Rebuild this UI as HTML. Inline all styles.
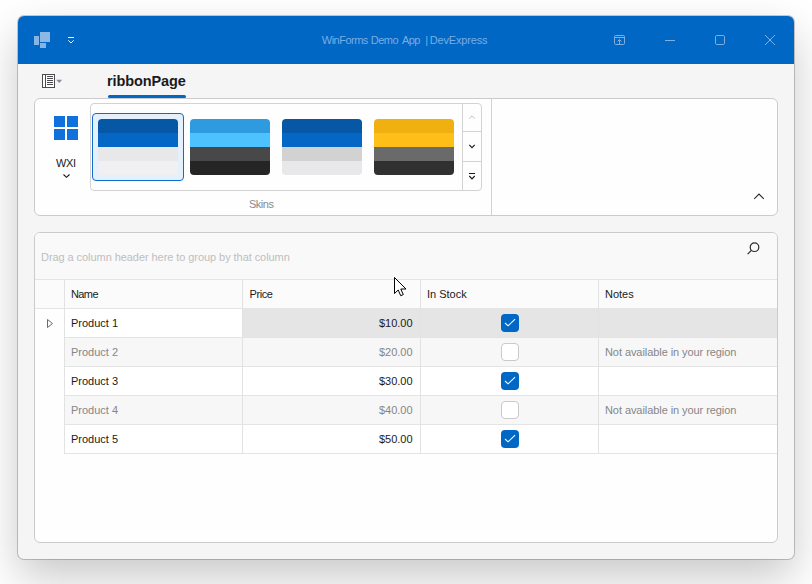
<!DOCTYPE html>
<html lang="en">
<head>
<meta charset="utf-8">
<title>WinForms Demo App | DevExpress</title>
<style>
html,body{margin:0;padding:0;}
body{width:812px;height:584px;overflow:hidden;background:#fff;position:relative;
  font-family:"Liberation Sans",sans-serif;font-size:11px;color:#1a1a1a;}
.abs,.win *{position:absolute;box-sizing:border-box;}
.win{position:absolute;box-sizing:border-box;left:18px;top:16px;width:776px;height:543px;background:#f5f5f6;border-radius:6px;
  box-shadow:0 0 0 1px rgba(0,0,0,.20), 0 18px 44px rgba(0,0,0,.22);overflow:hidden;}
.title{left:0;top:0;width:776px;height:48px;background:#0067c4;}
.title .cap{left:0;top:16px;width:776px;height:16px;line-height:16px;color:#78ade4;font-size:11px;white-space:pre;}
.title .cap span{top:0;height:16px;}
.tab{left:89px;top:55.3px;width:80px;height:20px;line-height:20px;font-weight:bold;font-size:14.5px;letter-spacing:-0.1px;color:#1a1a1a;white-space:nowrap;}
.tabline{left:90px;top:79px;width:77.5px;height:3px;border-radius:2px;background:#0067c4;}
.panel{background:#fefefe;border:1px solid #cbcbcb;border-radius:6px;}
.ribbon{left:16px;top:82px;width:744px;height:118px;}
.gal{left:72px;top:87px;width:392px;height:88px;border:1px solid #d2d2d2;border-radius:4px;background:#fefefe;}
.gsep{left:444px;top:88px;width:1px;height:86px;background:#d2d2d2;}
.gh{left:445px;width:18px;height:1px;background:#d2d2d2;}
.sel{left:74px;top:97px;width:92px;height:68px;border:1px solid #0f6ccf;border-radius:4px;background:#e4f0fb;}
.skin{top:103px;width:80px;height:56px;border-radius:4px;overflow:hidden;}
.skin i{left:0;width:80px;height:14px;}
.skin i:nth-child(1){top:0}.skin i:nth-child(2){top:14px}.skin i:nth-child(3){top:28px}.skin i:nth-child(4){top:42px}
.lbl{white-space:nowrap;height:14px;line-height:14px;}
.grid{left:16px;top:216px;width:744px;height:311px;overflow:hidden;}
.grid .gp{left:0;top:0;width:742px;height:47px;background:#f9f9f9;border-bottom:1px solid #e4e4e4;}
.grid .hd{left:0;top:47px;width:742px;height:29px;background:#fbfbfb;border-bottom:1px solid #e4e4e4;}
.row{left:0;width:742px;height:29px;border-bottom:1px solid #e4e4e4;}
.vl{width:1px;background:#e2e2e2;}
.cell{height:28px;line-height:28px;white-space:nowrap;}
.dis{color:#868688;}
.note{letter-spacing:-0.07px;}
.cb{width:18px;height:18px;border-radius:4px;left:466px;}
.cb.on{background:#0067c4;}
.cb.off{background:#fff;border:1px solid #cacaca;}
svg{position:absolute;overflow:visible;}
</style>
</head>
<body>
<div class="win">
  <div class="title">
    <svg style="left:16px;top:16px" width="17" height="16" viewBox="0 0 17 16" fill="#86b4e4">
      <rect x="0" y="4" width="5" height="9"/>
      <rect x="6" y="0" width="10" height="10" fill="#8cb8e6"/>
      <rect x="6" y="11" width="6" height="5"/>
    </svg>
    <svg style="left:50px;top:21px" width="6" height="7" viewBox="0 0 6 7" fill="none" stroke="#f4f8fd" stroke-width="1">
      <path d="M0 0.5H6M0.3 3.3L3 6L5.7 3.3"/>
    </svg>
    <div class="cap"><span style="left:303.8px;letter-spacing:-0.51px">WinForms </span><span style="left:352.7px;letter-spacing:-0.47px">Demo </span><span style="left:384px;letter-spacing:-0.55px">App </span><span style="left:407.2px">| </span><span style="left:411.8px;letter-spacing:-0.17px">DevExpress</span></div>
    <svg style="left:596px;top:19px" width="11" height="10" viewBox="0 0 11 10" fill="none" stroke="#7fb0e4" stroke-width="1">
      <rect x="0.5" y="0.5" width="10" height="9" rx="1.2"/><path d="M0.5 2.5H10.5M5.5 9V4.5M3.5 6.5L5.5 4.5L7.5 6.5"/>
    </svg>
    <svg style="left:647px;top:24px" width="10" height="1" viewBox="0 0 10 1"><rect width="10" height="1" fill="#7fb0e4"/></svg>
    <svg style="left:697px;top:19px" width="10" height="10" viewBox="0 0 10 10" fill="none" stroke="#7fb0e4" stroke-width="1"><rect x="0.5" y="0.5" width="9" height="9" rx="1.2"/></svg>
    <svg style="left:747px;top:19px" width="10" height="10" viewBox="0 0 10 10" fill="none" stroke="#7fb0e4" stroke-width="1"><path d="M0 0L10 10M10 0L0 10"/></svg>
  </div>

  <svg style="left:24px;top:58px" width="21" height="14" viewBox="0 0 21 14" fill="none" stroke="#4a4c50" stroke-width="1">
    <rect x="0.5" y="0.5" width="12" height="13" fill="#fdfdfd"/><path d="M3.5 0.5V13.5M5 2.5H11M5 4.5H11M5 6.5H11M5 8.5H11M5 10.5H11"/>
    <path d="M14.2 5.8H20.2L17.2 8.9Z" fill="#8c8c94" stroke="none"/>
  </svg>
  <div class="tab">ribbonPage</div>
  <div class="tabline"></div>

  <div class="panel ribbon"></div>
  <svg style="left:36px;top:100px" width="24" height="24" viewBox="0 0 24 24" fill="#0f72dc">
    <rect x="0" y="0" width="11" height="11"/><rect x="13" y="0" width="11" height="11"/>
    <rect x="0" y="13" width="11" height="11"/><rect x="13" y="13" width="11" height="11"/>
  </svg>
  <div class="lbl" style="left:37.9px;top:140px;letter-spacing:-0.3px">WXI</div>
  <svg style="left:44.6px;top:158px" width="8" height="4" viewBox="0 0 8 4" fill="none" stroke="#1a1a1a" stroke-width="1.1"><path d="M0.5 0.5L3.5 3.3L6.5 0.5"/></svg>

  <div class="gal"></div>
  <div class="gsep"></div>
  <div class="gh" style="top:115px"></div>
  <div class="gh" style="top:145px"></div>
  <svg style="left:451px;top:99px" width="6" height="4" viewBox="0 0 6 4" fill="none" stroke="#c0c0c2" stroke-width="1"><path d="M0.2 3.6L3 0.8L5.8 3.6"/></svg>
  <svg style="left:451px;top:128px" width="6" height="5" viewBox="0 0 6 5" fill="none" stroke="#1c1c1c" stroke-width="1.2"><path d="M0.3 0.9L3 3.7L5.7 0.9"/></svg>
  <svg style="left:451px;top:157px" width="6" height="7" viewBox="0 0 6 7" fill="none" stroke="#1c1c1c" stroke-width="1.2"><path d="M0 0.5H6M0.3 3L3 5.8L5.7 3"/></svg>
  <div class="sel"></div>
  <div class="skin" style="left:80px"><i style="background:#0657a6"></i><i style="background:#0467c6"></i><i style="background:#e8e8ea"></i><i style="background:#f0f0f2"></i></div>
  <div class="skin" style="left:172px"><i style="background:#2e9be0"></i><i style="background:#4cc2ff"></i><i style="background:#484848"></i><i style="background:#252525"></i></div>
  <div class="skin" style="left:264px"><i style="background:#0657a6"></i><i style="background:#0467c6"></i><i style="background:#d2d2d2"></i><i style="background:#e8e8ea"></i></div>
  <div class="skin" style="left:356px"><i style="background:#f0b010"></i><i style="background:#ffbe18"></i><i style="background:#6a6a6a"></i><i style="background:#303030"></i></div>
  <div class="lbl" style="left:231px;top:181px;color:#8a8a8a;letter-spacing:-0.5px">Skins</div>
  <div class="vl" style="left:473px;top:83px;height:116px;background:#d2d2d2"></div>
  <svg style="left:736px;top:177px" width="10" height="7" viewBox="0 0 10 7" fill="none" stroke="#2a2a2a" stroke-width="1.1"><path d="M0.2 5.9L5 1.1L9.8 5.9"/></svg>

  <div class="panel grid">
    <div class="gp"></div>
    <div class="lbl" style="left:6px;top:17px;color:#bebec0;letter-spacing:-0.065px">Drag a column header here to group by that column</div>
    <svg style="left:711.5px;top:9px" width="13" height="13" viewBox="0 0 13 13" fill="none" stroke="#2a2a2a" stroke-width="1.2"><circle cx="7.5" cy="5.2" r="4.3"/><path d="M4.4 8.4L0.6 12.2"/></svg>
    <div class="hd"></div>
    <div class="cell" style="left:36px;top:47px;letter-spacing:-0.6px">Name</div>
    <div class="cell" style="left:214.5px;top:47px;letter-spacing:-0.4px">Price</div>
    <div class="cell" style="left:392px;top:47px;">In Stock</div>
    <div class="cell" style="left:570px;top:47px;">Notes</div>

    <div class="row" style="top:76px;background:#e5e5e5"></div>
    <div class="row" style="top:76px;left:30px;width:177px;background:#fff"></div>
    <div class="row" style="top:105px;background:#f7f7f7"></div>
    <div class="row" style="top:134px;background:#fff"></div>
    <div class="row" style="top:163px;background:#f7f7f7"></div>
    <div class="row" style="top:192px;background:#fff"></div>
    <div style="left:0;top:76px;width:29px;height:146px;background:#fefefe"></div>
    <div class="vl" style="left:29px;top:47px;height:174px"></div>
    <div class="vl" style="left:207px;top:47px;height:174px"></div>
    <div class="vl" style="left:385px;top:47px;height:174px"></div>
    <div class="vl" style="left:563px;top:47px;height:174px"></div>
    <svg style="left:12px;top:86px" width="6" height="9" viewBox="0 0 6 9" fill="none" stroke="#6a6a6a" stroke-width="1"><path d="M0.5 0.5V8.5L5.5 4.5Z"/></svg>

    <div class="cell" style="left:36px;top:76px;">Product 1</div>
    <div class="cell dis" style="left:36px;top:105px;">Product 2</div>
    <div class="cell" style="left:36px;top:134px;">Product 3</div>
    <div class="cell dis" style="left:36px;top:163px;">Product 4</div>
    <div class="cell" style="left:36px;top:192px;">Product 5</div>

    <div class="cell" style="left:208px;width:169.6px;text-align:right;top:76px;">$10.00</div>
    <div class="cell dis" style="left:208px;width:169.6px;text-align:right;top:105px;">$20.00</div>
    <div class="cell" style="left:208px;width:169.6px;text-align:right;top:134px;">$30.00</div>
    <div class="cell dis" style="left:208px;width:169.6px;text-align:right;top:163px;">$40.00</div>
    <div class="cell" style="left:208px;width:169.6px;text-align:right;top:192px;">$50.00</div>

    <div class="cb on" style="top:81px"></div>
    <div class="cb off" style="top:110px"></div>
    <div class="cb on" style="top:139px"></div>
    <div class="cb off" style="top:168px"></div>
    <div class="cb on" style="top:197px"></div>
    <svg style="left:470px;top:86px" width="10" height="8" viewBox="0 0 10 8" fill="none" stroke="#fff" stroke-width="1.1"><path d="M0 4L3.1 6.8L10.1 0.1"/></svg>
    <svg style="left:470px;top:144px" width="10" height="8" viewBox="0 0 10 8" fill="none" stroke="#fff" stroke-width="1.1"><path d="M0 4L3.1 6.8L10.1 0.1"/></svg>
    <svg style="left:470px;top:202px" width="10" height="8" viewBox="0 0 10 8" fill="none" stroke="#fff" stroke-width="1.1"><path d="M0 4L3.1 6.8L10.1 0.1"/></svg>

    <div class="cell dis note" style="left:570px;top:105px;">Not available in your region</div>
    <div class="cell dis note" style="left:570px;top:163px;">Not available in your region</div>
  </div>
</div>
<svg style="left:394px;top:277px" width="14" height="21" viewBox="0 0 14 21">
  <path d="M0.5 0.5V16.5L4.2 13L6.7 18.7L9.3 17.6L6.8 12H12Z" fill="#fff" stroke="#000" stroke-width="1" stroke-linejoin="miter"/>
</svg>
</body>
</html>
